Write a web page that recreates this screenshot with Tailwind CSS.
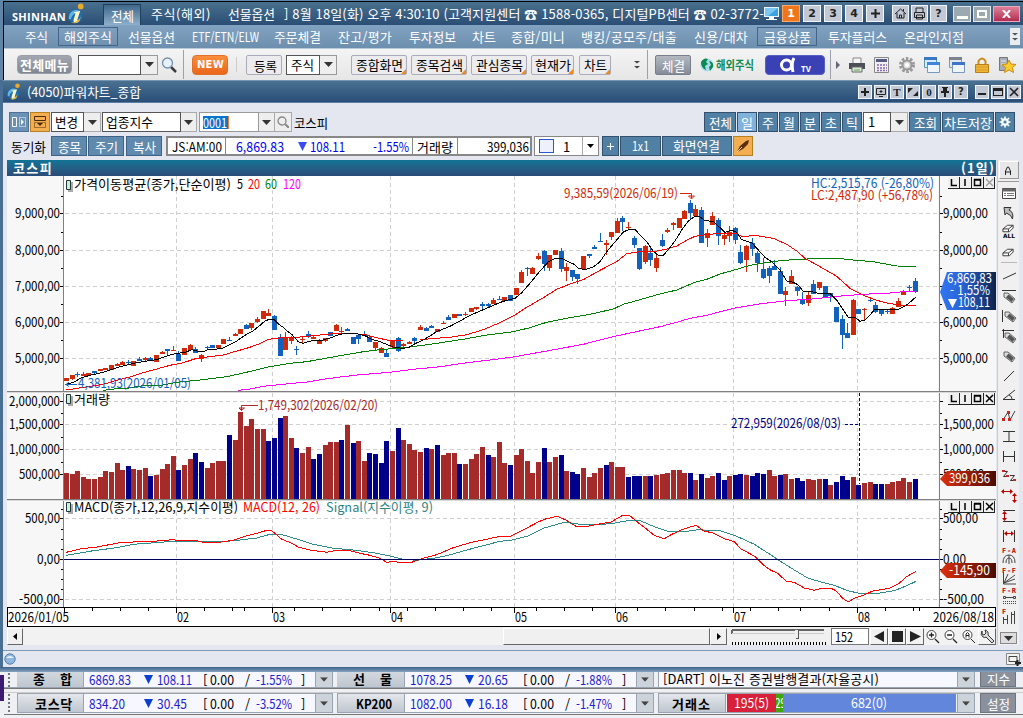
<!DOCTYPE html>
<html lang="ko">
<head>
  <meta charset="UTF-8">
  <meta name="viewport" content="width=device-width, initial-scale=1">
  <title>파워차트_종합</title>
  <script src="https://cdn.jsdelivr.net/npm/@tailwindcss/browser@4"></script>
</head>
<body class="w-[1023px] h-[718px] overflow-hidden bg-[#e4e7f0] font-['Noto_Sans_CJK_KR',sans-serif] text-[13px] leading-none text-black">

  <!-- Shared icons -->
  <svg class="hidden">
    <symbol id="logo" viewBox="0 0 18 22">
      <circle cx="8" cy="14" r="7.5" fill="#1b6fb0"/><path d="M1 17a8 8 0 0 1 11-9l-3 3c-3 0-5 2-6 6z" fill="#63b5e4"/>
      <circle cx="13.500" cy="3.500" r="3" fill="#e9a92c"/><path d="M6 10l7-2-3 9c0 2 2 1 3 0l-2 3c-3 2-6 1-5-3l2-6z" fill="#fff3c4"/><path d="M3 20q6 2 11-6l-2 5q-4 4-9 1z" fill="#e3aa35"/>
    </symbol>
    <symbol id="down" viewBox="0 0 9 5"><path d="M0 0h9L4.500 5z" fill="currentColor"/></symbol>
    <symbol id="lens" viewBox="0 0 16 16"><path d="M10 10l5 5" stroke="#3b3b3b" stroke-width="2.500"/><circle cx="6.500" cy="6" r="5" fill="#e6f1fa" stroke="#7590a8" stroke-width="1.300"/></symbol>
    <symbol id="pen" viewBox="0 0 20 20"><path d="M5 6h4l7 6-3 4-8-6z" fill="#ddd" stroke="#444" stroke-width=".8"/><path d="M9.500 7.500l5.500 4.500-2.500 3-5.500-4.500z" fill="#555"/></symbol>
    <symbol id="eraser" viewBox="0 0 14 9"><path d="M1 5l5-4h6v3L8 8H1zM1 5h6l5-4M7 5v3" fill="#fff" stroke="#333"/></symbol>
    <symbol id="chev" viewBox="0 0 6 9"><path d="M0 1h6L3 3.500zM0 6h6L3 8.500z" fill="currentColor"/></symbol>
  </svg>

  <!-- App frame -->
  <div class="h-[80px] bg-[#5f86a6] pl-[3px] pt-px">
  <div class="h-[79px] bg-black pl-px pt-px overflow-hidden">
    <header class="flex items-center h-[23px] bg-linear-to-b from-[#49708f] to-[#2b4e74] text-white">
      <span data-fit class="ml-[8px] mt-[5px] w-[54px] font-bold font-['Open_Sans'] text-[11px]">SHINHAN</span>
      <svg class="ml-[2px] w-[17px] h-[21px]"><use href="#logo"/></svg>
      <div class="ml-[18px] mt-[2px] w-[38px] h-[21px] pl-[7px] pt-[4px] border border-[#223f5e] border-b-0 bg-linear-to-b from-[#3e678a] to-[#8fb0cb]"><span data-fit class="block w-[23px]">전체</span></div>
      <span data-fit class="ml-[10px] w-[60px]">주식(해외)</span>
      <span data-fit class="ml-[17px] w-[47px]">선물옵션</span>
      <span data-fit class="ml-[9px] w-[480px]">] 8월 18일(화) 오후 4:30:10 (고객지원센터 ☎ 1588-0365, 디지털PB센터 ☎ 02-3772-</span>
      <svg class="w-[16px] h-[16px] shrink-0" viewBox="0 0 16 16"><path d="M0 1h15v10H0z" fill="#e8f3fb"/><path d="M1 2h13v8H1z" fill="#3ea1e0"/><path d="M1 2h13L4 10H1z" fill="#7cc8f2"/><path d="M5 11h5v2h3v1H2v-1h3z" fill="#fff"/></svg>
      <div class="flex gap-[3px] ml-[2px] font-bold font-['DejaVu_Sans'] text-[11px] text-[#222] text-center leading-[15px]">
        <span class="w-[18px] h-[17px] border border-[#f8a96b] bg-[#f0761d] text-white">1</span>
        <span class="w-[18px] h-[17px] border border-[#f3f5f8] bg-[#c3c9d4]">2</span>
        <span class="w-[18px] h-[17px] border border-[#f3f5f8] bg-[#c3c9d4]">3</span>
        <span class="w-[18px] h-[17px] border border-[#f3f5f8] bg-[#c3c9d4]">4</span>
        <span class="w-[18px] h-[17px] border border-[#f3f5f8] bg-[#c3c9d4] flex items-center justify-center"><svg width="9" height="9"><path d="M3.500 0h2v3.500H9v2H5.500V9h-2V5.500H0v-2h3.500z" fill="#222"/></svg></span>
      </div>
      <div class="flex gap-[2px] ml-[8px] shrink-0">
        <span class="w-[17px] h-[17px] border border-[#f3f5f8] bg-[#c3c9d4]"><svg viewBox="0 0 15 15"><path d="M2 8l5.500-5L13 8M4 7v5h7V7M6.500 12V9h2v3M10.500 3v2" fill="none" stroke="#222"/></svg></span>
        <span class="w-[17px] h-[17px] border border-[#f3f5f8] bg-[#c3c9d4]"><svg viewBox="0 0 15 15"><path d="M4 6V2h7v4M2.500 6.500h10v5h-10zM4.500 9h6v4h-6z" fill="none" stroke="#222"/></svg></span>
        <span class="w-[17px] h-[17px] border border-[#f3f5f8] bg-[#c3c9d4] font-bold font-['DejaVu_Sans'] text-[11px] text-[#222] text-center leading-[15px]">?</span>
      </div>
      <div class="flex gap-[2px] ml-[6px] shrink-0">
        <span class="w-[18px] h-[16px] border border-[#e1e7ea] bg-[#9da9b1] flex items-end justify-center pb-[2px]"><i class="w-[11px] h-[3px] bg-white"></i></span>
        <span class="w-[18px] h-[16px] border border-[#e1e7ea] bg-[#9da9b1] flex items-center justify-center"><i class="w-[10px] h-[8px] border-2 border-white"></i></span>
        <span class="w-[27px] h-[16px] border border-[#e8aabb] bg-linear-to-b from-[#dc8099] to-[#b32850] flex items-center justify-center"><svg width="9" height="8"><path d="M1 0l7 8M8 0L1 8" stroke="#fff" stroke-width="2"/></svg></span>
      </div>
    </header>

    <nav class="flex items-center h-[23px] bg-linear-to-b from-[#82a2c1] to-[#6d8fae] text-white">
      <span data-fit class="ml-[21px] w-[23px]">주식</span>
      <div class="ml-[10px] w-[60px] h-[19px] border border-[#44648a] pl-[5px] pt-[2px]"><span data-fit class="block w-[48px]">해외주식</span></div>
      <span data-fit class="ml-[10px] w-[47px]">선물옵션</span>
      <span data-fit class="ml-[17px] w-[67px]">ETF/ETN/ELW</span>
      <span data-fit class="ml-[15px] w-[47px]">주문체결</span>
      <span data-fit class="ml-[17px] w-[54px]">잔고/평가</span>
      <span data-fit class="ml-[17px] w-[47px]">투자정보</span>
      <span data-fit class="ml-[16px] w-[24px]">차트</span>
      <span data-fit class="ml-[15px] w-[54px]">종합/미니</span>
      <span data-fit class="ml-[16px] w-[96px]">뱅킹/공모주/대출</span>
      <span data-fit class="ml-[17px] w-[54px]">신용/대차</span>
      <div class="ml-[9px] w-[60px] h-[19px] border border-[#44648a] pl-[6px] pt-[2px]"><span data-fit class="block w-[47px]">금융상품</span></div>
      <span data-fit class="ml-[11px] w-[59px]">투자플러스</span>
      <span data-fit class="ml-[17px] w-[60px]">온라인지점</span>
      <span class="ml-[46px] w-[10px] h-[17px] bg-[#e9edf2] flex items-center justify-center text-[#555]"><svg width="6" height="9"><use href="#chev"/></svg></span>
    </nav>

    <div class="flex items-center h-[32px] bg-linear-to-b from-[#f4f4f5] to-[#e6e6e7] border-t border-t-[#b9c9d8] pl-[2px]">
      <div class="ml-[11px] w-[55px] h-[19px] rounded-sm border border-[#9a9fa8] bg-linear-to-b from-[#a2a7b0] to-[#828893] text-white font-bold pl-[2px] pt-[2px]"><span data-fit class="block w-[49px]">전체메뉴</span></div>
      <div class="ml-[6px] w-[63px] h-[20px] border border-[#555] bg-white"></div>
      <div class="w-[17px] h-[20px] border border-l-0 border-[#999] bg-[#eee] flex items-center justify-center text-[#333]"><svg width="9" height="5"><use href="#down"/></svg></div>
      <svg class="ml-[3px] w-[16px] h-[16px]"><use href="#lens"/></svg>
      <i class="ml-[6px] w-px h-[29px] bg-[#9aa2ad]"></i>
      <div class="ml-[8px] w-[36px] h-[20px] rounded-sm border border-[#e0702a] bg-linear-to-b from-[#fb8e3c] to-[#e9661a] text-white font-bold font-['DejaVu_Sans'] text-[10px] pl-[4px] pt-[4px]"><span data-fit class="block w-[27px]">NEW</span></div>
      <i class="ml-[8px] w-px h-[15px] bg-[#ccc]"></i>
      <div class="ml-[9px] w-[36px] h-[20px] rounded-xs border border-[#aab] bg-[#ececee] pl-[7px] pt-[3px]"><span data-fit class="block w-[23px]">등록</span></div>
      <div class="ml-[4px] w-[34px] h-[20px] border border-[#555] bg-white pl-[4px] pt-[2px]"><span data-fit class="block w-[23px]">주식</span></div>
      <div class="w-[17px] h-[20px] border border-l-0 border-[#999] bg-[#eee] flex items-center justify-center text-[#333]"><svg width="9" height="5"><use href="#down"/></svg></div>
      <div class="relative ml-[14px] w-[56px] h-[20px] rounded-xs border border-[#aab] bg-[#ececee] pl-[4px] pt-[2px]"><span data-fit class="block w-[47px]">종합화면</span><svg class="absolute right-0 bottom-0" width="5" height="5"><path d="M5 0v5H0z" fill="#ee8a1d"/></svg></div>
      <div class="relative ml-[4px] w-[56px] h-[20px] rounded-xs border border-[#aab] bg-[#ececee] pl-[4px] pt-[2px]"><span data-fit class="block w-[47px]">종목검색</span><svg class="absolute right-0 bottom-0" width="5" height="5"><path d="M5 0v5H0z" fill="#ee8a1d"/></svg></div>
      <div class="relative ml-[4px] w-[56px] h-[20px] rounded-xs border border-[#aab] bg-[#ececee] pl-[4px] pt-[2px]"><span data-fit class="block w-[47px]">관심종목</span><svg class="absolute right-0 bottom-0" width="5" height="5"><path d="M5 0v5H0z" fill="#ee8a1d"/></svg></div>
      <div class="relative ml-[4px] w-[43px] h-[20px] rounded-xs border border-[#aab] bg-[#ececee] pl-[3px] pt-[2px]"><span data-fit class="block w-[36px]">현재가</span><svg class="absolute right-0 bottom-0" width="5" height="5"><path d="M5 0v5H0z" fill="#ee8a1d"/></svg></div>
      <div class="relative ml-[5px] w-[32px] h-[20px] rounded-xs border border-[#aab] bg-[#ececee] pl-[4px] pt-[2px]"><span data-fit class="block w-[23px]">차트</span><svg class="absolute right-0 bottom-0" width="5" height="5"><path d="M5 0v5H0z" fill="#ee8a1d"/></svg></div>
      <svg class="ml-[23px] text-[#444]" width="6" height="9"><use href="#chev"/></svg>
      <i class="ml-[7px] w-px h-[29px] bg-[#9aa2ad]"></i>
      <div class="ml-[7px] w-[36px] h-[20px] rounded-xs border border-[#777f8b] bg-linear-to-b from-[#b3b8bf] to-[#868d98] text-white pl-[6px] pt-[3px]"><span data-fit class="block w-[23px]">체결</span></div>
      <svg class="ml-[9px]" width="14" height="14"><circle cx="7" cy="7" r="6.500" fill="#a9dcee"/><path d="M1 4q3-5 7-3l-2 3 2 2-3 2 1 4q-5-2-5-8zM9 3q5 1 4 6l-3 4-1-4 2-2z" fill="#0c8a54"/></svg>
      <span data-fit class="ml-[2px] w-[38px] font-bold text-[#0c8a50] text-[12px]">해외주식</span>
      <div class="ml-[11px] w-[60px] h-[20px] rounded-sm bg-[#3a41b4] border border-[#5560c4] shrink-0">
        <svg width="58" height="18"><circle cx="20.500" cy="9" r="5" fill="none" stroke="#fff" stroke-width="3"/><path d="M28 2q-3 5-1 14" fill="none" stroke="#fff" stroke-width="3"/><text x="35" y="16" fill="#fff" font-size="8" font-weight="700" font-family="Open Sans">TV</text></svg>
      </div>
      <i class="ml-[5px] w-px h-[29px] bg-[#9aa2ad]"></i>
      <svg class="ml-[5px]" width="4" height="8"><path d="M0 0l4 4-4 4z" fill="#667"/></svg>
      <div class="flex gap-[9px] ml-[9px] shrink-0">
        <svg width="16" height="16"><path d="M4 1h8v6H4z" fill="#f6f6f6" stroke="#888"/><path d="M0 6h16v6H0z" fill="#4b4f56"/><path d="M3 10h10v5H3z" fill="#dfe9da" stroke="#666"/><path d="M5 13h6" stroke="#5a5"/></svg>
        <svg width="16" height="16"><path d="M.5.5h14v15H.5z" fill="#f0eff5" stroke="#888"/><path d="M2 2h11v3H2z" fill="#555a80"/><path d="M3 8h10M3 11h10M3 13.500h10" stroke="#8468a8" stroke-width="1.500" stroke-dasharray="2 1"/></svg>
        <svg width="16" height="16"><circle cx="8" cy="8" r="6.500" fill="none" stroke="#999" stroke-width="3" stroke-dasharray="2.500 1.600"/><circle cx="8" cy="8" r="4.500" fill="#ddd" stroke="#999" stroke-width="2"/><circle cx="8" cy="8" r="2" fill="#fff"/></svg>
        <svg width="16" height="16"><path d="M.5.5h12v10H.5z" fill="#dbeafa" stroke="#59a"/><path d="M0 0h13v3H0z" fill="#3978c8"/><path d="M3.500 5.500h12v10h-12z" fill="#eef5fc" stroke="#79b"/><path d="M3 5h13v3H3z" fill="#3f84d8"/></svg>
        <svg width="16" height="16"><path d="M.5.5h12v10H.5z" fill="#e4e7ea" stroke="#899"/><path d="M0 0h13v3H0z" fill="#7a8490"/><path d="M3.500 5.500h12v10h-12z" fill="#eef5fc" stroke="#79b"/><path d="M3 5h13v3H3z" fill="#3f74c8"/></svg>
        <svg width="16" height="16"><path d="M4.500 7V4q3.500-5 7 0v3" fill="none" stroke="#c98e20" stroke-width="2"/><path d="M1.500 7.500h13v8h-13z" fill="#f0b534" stroke="#b8801c"/><path d="M2 10h12M2 13h12" stroke="#d79a26"/></svg>
        <svg width="17" height="16"><path d="M.5.500h8v13h-8z" fill="#a7adb4" stroke="#777"/><path d="M2 4h5M2 7h5" stroke="#eee"/><path d="M10 3l2 4 5 .5-3.500 3 1 5-4.500-2.500L5.500 15.500l1-5L3 7.500l5-.5z" fill="#fbcb2c" stroke="#c88d15"/></svg>
      </div>
    </div>
  </div>
  </div>

  <!-- Chart window -->
  <div class="h-[592px] border-l-[3px] border-[#4a6f94] bg-[#e4e7f0]">
    <div class="flex items-center h-[23px] bg-linear-to-b from-[#4a7191] to-[#294e78] border-t border-t-[#7595b2] border-b border-b-[#5a7fa2] text-white">
      <svg class="ml-[4px] w-[14px] h-[17px]"><use href="#logo"/></svg>
      <span data-fit class="ml-[6px] w-[114px]">(4050)파워차트_종합</span>
      <div class="flex gap-[2px] ml-[717px] text-[#222] text-[11px] font-bold font-['Liberation_Serif'] text-center leading-[12px] shrink-0">
        <span class="w-[14px] h-[14px] border border-[#f3f5f8] bg-[#c3c9d4]"><svg viewBox="0 0 12 12"><path d="M5 2h2v3h3v2H7v3H5V7H2V5h3z" fill="#222"/></svg></span>
        <span class="w-[14px] h-[14px] border border-[#f3f5f8] bg-[#c3c9d4]"><svg viewBox="0 0 12 12"><path d="M1.500 2.500h9v6h-9zM4 10.500h4M6 4v3M4.500 5.500h3" fill="none" stroke="#222"/></svg></span>
        <span class="w-[14px] h-[14px] border border-[#f3f5f8] bg-[#c3c9d4]">T</span>
        <span class="w-[14px] h-[14px] border border-[#f3f5f8] bg-[#c3c9d4]"><svg viewBox="0 0 12 12"><path d="M1 2h5L1 7zM11 5v5H6z" fill="#222"/></svg></span>
        <span class="w-[14px] h-[14px] border border-[#f3f5f8] bg-[#c3c9d4]">0</span>
        <span class="w-[14px] h-[14px] border border-[#f3f5f8] bg-[#c3c9d4]"><svg viewBox="0 0 12 12"><path d="M3 1h6v1H8v3h2v2H7v4H5V7H2V5h2V2H3z" fill="#222"/></svg></span>
        <span class="w-[14px] h-[14px] border border-[#f3f5f8] bg-[#c3c9d4] font-['DejaVu_Sans'] text-[10px]">?</span>
      </div>
      <div class="flex gap-[2px] ml-[7px] shrink-0">
        <span class="w-[14px] h-[14px] border border-[#f3f5f8] bg-[#c3c9d4]"><svg viewBox="0 0 12 12"><path d="M2 7h8v2H2z" fill="#222"/></svg></span>
        <span class="w-[14px] h-[14px] border border-[#f3f5f8] bg-[#c3c9d4]"><svg viewBox="0 0 12 12"><path d="M1 2h10v8H1zm1 3v4h8V5z" fill="#222" fill-rule="evenodd"/></svg></span>
        <span class="w-[14px] h-[14px] border border-[#f3f5f8] bg-[#c3c9d4]"><svg viewBox="0 0 12 12"><path d="M2 2l8 8M10 2l-8 8" stroke="#222" stroke-width="1.600"/></svg></span>
      </div>
    </div>

    <!-- Symbol row -->
    <div class="flex items-center h-[20px] mt-[9px] pl-[6px]">
      <div class="w-[20px] h-[20px] border border-[#4f7195] bg-[#6b92b5]"><svg viewBox="0 0 18 18"><path d="M2.500 4.500h4v9h-4z" fill="none" stroke="#fff"/><path d="M9.500 4.500h6v9h-6z" fill="none" stroke="#fff" stroke-dasharray="1 1"/><path d="M11 6l3 3-3 3z" fill="#fff"/></svg></div>
      <div class="ml-px w-[20px] h-[20px] border border-[#b9801f] bg-[#f3ae52]"><svg viewBox="0 0 18 18"><path d="M3.500 3.500h11v4h-11z" fill="none" stroke="#4a2d08"/><path d="M3.500 9.500h11v5h-11z" fill="none" stroke="#4a2d08" stroke-dasharray="1 1"/><path d="M6 10h6l-3 3z" fill="#4a2d08"/></svg></div>
      <div class="ml-px w-[33px] h-[20px] border border-[#555] bg-white pl-[3px] pt-[2px]"><span data-fit class="block w-[23px]">변경</span></div>
      <div class="w-[17px] h-[20px] border border-l-0 border-[#aaa] bg-[#eee] flex items-center justify-center text-[#333]"><svg width="9" height="5"><use href="#down"/></svg></div>
      <div class="ml-px w-[79px] h-[20px] border border-[#555] bg-white pl-[3px] pt-[2px]"><span data-fit class="block w-[47px]">업종지수</span></div>
      <div class="w-[16px] h-[20px] border border-l-0 border-[#aaa] bg-[#eee] flex items-center justify-center text-[#333]"><svg width="9" height="5"><use href="#down"/></svg></div>
      <div class="ml-[2px] w-[60px] h-[20px] border border-[#999] bg-white pl-[3px] pt-[3px]"><div class="w-[26px] h-[13px] bg-[#0b74cf] border-r border-[#f08030] text-white"><span data-fit class="block w-[24px]">0001</span></div></div>
      <div class="w-[16px] h-[20px] border border-l-0 border-[#aaa] bg-[#eee] flex items-center justify-center text-[#333]"><svg width="9" height="5"><use href="#down"/></svg></div>
      <div class="w-[17px] h-[20px] border border-l-0 border-[#aaa] bg-[#eee] flex items-center justify-center"><svg class="w-[12px] h-[12px]" viewBox="0 0 12 12"><circle cx="5" cy="5" r="4" fill="none" stroke="#888" stroke-width="1.300"/><path d="M8 8l4 4" stroke="#888" stroke-width="2"/></svg></div>
      <span data-fit class="ml-[2px] w-[34px]">코스피</span>
      <div class="flex gap-px ml-[376px] text-white shrink-0">
        <div class="w-[32px] h-[20px] border border-[#33506f] bg-[#5180a5] pl-[4px] pt-[3px]"><span data-fit class="block w-[23px]">전체</span></div>
        <div class="w-[20px] h-[20px] border border-[#33506f] bg-[#7fb2dc] text-center pt-[3px]">일</div>
        <div class="w-[20px] h-[20px] border border-[#33506f] bg-[#5180a5] text-center pt-[3px]">주</div>
        <div class="w-[20px] h-[20px] border border-[#33506f] bg-[#5180a5] text-center pt-[3px]">월</div>
        <div class="w-[20px] h-[20px] border border-[#33506f] bg-[#5180a5] text-center pt-[3px]">분</div>
        <div class="w-[20px] h-[20px] border border-[#33506f] bg-[#5180a5] text-center pt-[3px]">초</div>
        <div class="w-[20px] h-[20px] border border-[#33506f] bg-[#5180a5] text-center pt-[3px]">틱</div>
        <div class="flex"><div class="w-[28px] h-[20px] border border-[#555] bg-white text-black pl-[4px] pt-[2px]">1</div><div class="w-[17px] h-[20px] border border-l-0 border-[#aaa] bg-[#eee] flex items-center justify-center text-[#333]"><svg width="9" height="5"><use href="#down"/></svg></div></div>
        <div class="w-[32px] h-[20px] border border-[#33506f] bg-[#5180a5] pl-[4px] pt-[3px]"><span data-fit class="block w-[23px]">조회</span></div>
        <div class="w-[52px] h-[20px] border border-[#33506f] bg-[#5180a5] pl-[1px] pt-[3px]"><span data-fit class="block w-[48px]">차트저장</span></div>
        <div class="w-[20px] h-[20px] border border-[#33506f] bg-[#5180a5]"><svg viewBox="0 0 18 18"><circle cx="9" cy="9" r="2.800" fill="none" stroke="#fff" stroke-width="2"/><path d="M9 3.500v11M3.500 9h11M5 5l2 2M11 11l2 2M13 5l-2 2M7 11l-2 2" stroke="#fff" stroke-width="1.600"/><circle cx="9" cy="9" r="1.500" fill="#5180a5"/></svg></div>
      </div>
    </div>

    <!-- Quote row -->
    <div class="flex items-center h-[20px] mt-[4px] pl-[8px]">
      <span data-fit class="w-[35px]">동기화</span>
      <div class="ml-[5px] w-[36px] h-[20px] border border-[#3e6288] bg-[#5f8aae] text-white pl-[6px] pt-[3px]"><span data-fit class="block w-[23px]">종목</span></div>
      <div class="ml-px w-[36px] h-[20px] border border-[#3e6288] bg-[#5f8aae] text-white pl-[6px] pt-[3px]"><span data-fit class="block w-[23px]">주기</span></div>
      <div class="ml-[2px] w-[36px] h-[20px] border border-[#3e6288] bg-[#5f8aae] text-white pl-[6px] pt-[3px]"><span data-fit class="block w-[23px]">복사</span></div>
      <div class="flex items-center ml-[4px] w-[366px] h-[20px] border-2 border-[#888] bg-white text-[#0000f0] shrink-0">
        <span data-fit class="ml-[4px] w-[50px] text-black">JS:AM:00</span><i class="ml-[3px] w-px h-full bg-[#888]"></i>
        <span data-fit class="ml-[10px] w-[48px]">6,869.83</span>
        <svg class="ml-[14px]" width="9" height="9"><path d="M0 0h9L4.500 9z" fill="#3b4cf5"/></svg>
        <span data-fit class="ml-[3px] w-[35px]">108.11</span>
        <span data-fit class="ml-[28px] w-[36px]">-1.55%</span><i class="ml-[3px] w-px h-full bg-[#888]"></i>
        <span data-fit class="ml-[4px] w-[36px] text-black">거래량</span><i class="ml-[4px] w-px h-full bg-[#888]"></i>
        <span data-fit class="ml-[29px] w-[42px] text-black">399,036</span>
      </div>
      <div class="flex items-center ml-[2px] w-[65px] h-[20px] border border-[#888] bg-white shrink-0"><i class="ml-[4px] w-[15px] h-[14px] border border-[#2b57c8] bg-[#eef1fb]"></i><span class="ml-[9px]">1</span><div class="ml-auto w-[16px] h-full border-l border-[#aaa] flex items-center justify-center"><svg width="7" height="4" viewBox="0 0 9 5"><use href="#down"/></svg></div></div>
      <div class="ml-[3px] w-[17px] h-[20px] border border-[#33506f] bg-[#5180a5] flex items-center justify-center"><svg width="7" height="7"><path d="M3.500 0v7M0 3.500h7" stroke="#fff"/></svg></div>
      <div class="ml-px w-[41px] h-[20px] border border-[#33506f] bg-[#5180a5] text-white pl-[11px] pt-[2px]"><span data-fit class="block w-[17px]">1x1</span></div>
      <div class="ml-px w-[70px] h-[20px] border border-[#33506f] bg-[#5180a5] text-white pl-[10px] pt-[2px]"><span data-fit class="block w-[47px]">화면연결</span></div>
      <div class="ml-px w-[20px] h-[20px] border border-[#b9801f] bg-[#f3ae52]"><svg viewBox="0 0 18 18"><path d="M3 15l3-6 6-5 3-1-1 4-5 5z" fill="#5a2d0b"/><path d="M3 15l5-5" stroke="#f8d9a8"/></svg></div>
    </div>

    <div class="flex mt-[4px] ml-[4px] h-[485px]">
      <!-- Chart column -->
      <div class="w-[989px] shrink-0">
        <div class="flex justify-between h-[16px] bg-linear-to-b from-[#107496] to-[#294c78] text-white font-bold pl-[6px] pr-px pt-px"><span data-fit class="w-[40px]">코스피</span><span data-fit class="w-[34px]">(1일)</span></div>
        <svg id="chart" class="block" width="989" height="451" viewBox="7 176 989 451" font-size="13">
          <defs>
            <linearGradient id="redTag"><stop offset="0" stop-color="#e0300e"/><stop offset="1" stop-color="#4a0b02"/></linearGradient>
            <linearGradient id="blueTag"><stop offset="0" stop-color="#3277f4"/><stop offset=".4" stop-color="#2a62d4"/><stop offset="1" stop-color="#0f2348"/></linearGradient>
            <g id="paneBtns"><path d="M0 0h47v12H0z" fill="#f0f0f0"/><path d="M0 11.500h47M11.500 0v12M23.500 0v12M35.500 0v12M46.500 0v12" stroke="#222"/><path d="M3.500 2v6.500H9M17 2v7" stroke="#000" fill="none" stroke-width="1.500"/><path d="M26.500 3h6v5.500h-6zM26 2.500h7" fill="none" stroke="#000" stroke-width="1.500"/></g>
            <g id="legendBox"><path d="M2 2h5v10H2z" fill="#aaa"/><path d="M.5.500h4v9h-4z" fill="#c8f5c8" stroke="#234"/></g>
          </defs>
          <rect x="7" y="176" width="989" height="451" fill="#f7f7f7"/>
          <rect x="64" y="176" width="874" height="431" fill="#fff"/>
          <g shape-rendering="crispEdges" fill="none">
            <path stroke="#d0d0d0" stroke-dasharray="4 3" d="M65 213.500H938M65 250.500H938M65 286.500H938M65 322.500H938M65 358.500H938M65 401.500H938M65 424.500H938M65 449.500H938M65 474.500H938M65 518.500H938M65 599.500H938M176.500 176V607M272.500 176V607M390.500 176V607M514.500 176V607M615.500 176V607M733.500 176V607M857.500 176V607"/>
            <path stroke="#000" d="M60 213.500h4M60 250.500h4M60 286.500h4M60 322.500h4M60 358.500h4M60 401.500h4M60 424.500h4M60 449.500h4M60 474.500h4M60 518.500h4M60 559.500h4M60 599.500h4M61 196.500h3M61 232.500h3M61 268.500h3M61 304.500h3M61 340.500h3M61 413.500h3M61 437.500h3M61 462.500h3M61 509.500h3M61 529.500h3M61 539.500h3M61 549.500h3M61 569.500h3M61 579.500h3M61 589.500h3"/>
            <path stroke="#000" d="M939 213.500h4M939 250.500h4M939 286.500h4M939 322.500h4M939 358.500h4M939 401.500h4M939 424.500h4M939 449.500h4M939 474.500h4M939 518.500h4M939 559.500h4M939 599.500h4M939 196.500h3M939 232.500h3M939 268.500h3M939 304.500h3M939 340.500h3M939 413.500h3M939 437.500h3M939 462.500h3M939 509.500h3M939 529.500h3M939 539.500h3M939 549.500h3M939 569.500h3M939 579.500h3M939 589.500h3"/>
          </g>
          <g id="bars" shape-rendering="crispEdges"></g>
          <g id="lines" fill="none" shape-rendering="crispEdges"></g>
          <g shape-rendering="crispEdges">
            <path stroke="#808080" d="M63.500 176V607M939 176V607M7 391.500H996M7 499.500H996"/>
            <path stroke="#d8d8d8" d="M7 392.500H996M7 500.500H996"/>
            <path stroke="#000060" d="M64 559.500H939"/>
            <path stroke="#000080" stroke-dasharray="3 2" d="M859.500 393V484M845 424.500h14"/>
            <path d="M7.500 607.500h988v19h-988z" fill="#fff" stroke="#000"/>
            <path stroke="#000" d="M64.500 607v6M176.500 607v6M272.500 607v6M390.500 607v6M514.500 607v6M615.500 607v6M733.500 607v6M857.500 607v6M92.500 607v4M120.500 607v4M148.500 607v4M204.500 607v4M232.500 607v4M244.500 607v4M294.500 607v4M322.500 607v4M350.500 607v4M379.500 607v4M407.500 607v4M435.500 607v4M463.500 607v4M491.500 607v4M536.500 607v4M564.500 607v4M592.500 607v4M637.500 607v4M665.500 607v4M694.500 607v4M722.500 607v4M750.500 607v4M778.500 607v4M800.500 607v4M829.500 607v4M885.500 607v4M913.500 607v4M919.500 607v4"/>
          </g>
          <!-- Axis labels -->
          <g>
            <text x="15" y="218" textLength="45">9,000,00</text><text x="15" y="255" textLength="45">8,000,00</text><text x="15" y="291" textLength="45">7,000,00</text><text x="15" y="327" textLength="45">6,000,00</text><text x="15" y="363" textLength="45">5,000,00</text>
            <text x="9" y="406" textLength="51">2,000,000</text><text x="9" y="429" textLength="51">1,500,000</text><text x="9" y="454" textLength="51">1,000,000</text><text x="19" y="479" textLength="41">500,000</text>
            <text x="25" y="523" textLength="35">500,00</text><text x="37" y="564" textLength="23">0,00</text><text x="19" y="604" textLength="41">-500,00</text>
            <text x="943" y="218" textLength="45">9,000,00</text><text x="943" y="255" textLength="45">8,000,00</text><text x="943" y="327" textLength="45">6,000,00</text><text x="943" y="363" textLength="45">5,000,00</text>
            <text x="943" y="429" textLength="51">1,500,000</text><text x="943" y="454" textLength="51">1,000,000</text><text x="943" y="479" textLength="41">500,000</text>
            <text x="943" y="523" textLength="35">500,00</text><text x="943" y="564" textLength="23">0,00</text><text x="943" y="604" textLength="41">-500,00</text>
            <text x="8" y="622" textLength="61">2026/01/05</text><text x="177" y="622" textLength="12">02</text><text x="273" y="622" textLength="12">03</text><text x="391" y="622" textLength="12">04</text><text x="515" y="622" textLength="12">05</text><text x="616" y="622" textLength="12">06</text><text x="734" y="622" textLength="12">07</text><text x="858" y="622" textLength="12">08</text><text x="933" y="622" textLength="61">2026/08/18</text>
          </g>
          <use href="#legendBox" x="66" y="180"/><use href="#legendBox" x="66" y="394"/><use href="#legendBox" x="66" y="502"/>
          <text x="74" y="189" textLength="157">가격이동평균(종가,단순이평)</text><text x="237" y="189" textLength="6">5</text><text x="248" y="189" fill="#f00" textLength="12">20</text><text x="265" y="189" fill="#008000" textLength="12">60</text><text x="283" y="189" fill="#f0f" textLength="18">120</text>
          <text x="74" y="404" textLength="36">거래량</text>
          <text x="74" y="512" textLength="164">MACD(종가,12,26,9,지수이평)</text><text x="243" y="512" fill="#f00" textLength="77">MACD(12, 26)</text><text x="326" y="512" fill="#2f8484" textLength="107">Signal(지수이평, 9)</text>
          <text x="564" y="198" fill="#cf2a0c" textLength="114">9,385,59(2026/06/19)</text>
          <path d="M680 193.500h11.500v5M688.500 196l3 3 3-3z" fill="none" stroke="#cf2a0c"/>
          <text x="78" y="388" fill="#1261bd" textLength="113">4,381,93(2026/01/05)</text>
          <path d="M77 384.500H65M69 382l-3 2.500 3 2" fill="none" stroke="#1261bd"/>
          <text x="811" y="188" fill="#1261bd" textLength="123">HC:2,515,76 (-26,80%)</text>
          <text x="811" y="200" fill="#cf2a0c" textLength="122">LC:2,487,90 (+56,78%)</text>
          <text x="258" y="410" fill="#a52a2a" textLength="120">1,749,302(2026/02/20)</text>
          <path d="M258 405.500h-16.500v5M239 408l2.500 2.500 3-2.500z" fill="none" stroke="#a52a2a"/>
          <text x="731" y="428" fill="#000080" textLength="110">272,959(2026/08/03)</text>
          <!-- Price tags -->
          <path d="M940 292l7-20h49v38h-49z" fill="url(#blueTag)"/>
          <g fill="#fff"><text x="947" y="283" textLength="45">6,869,83</text><text x="950" y="295" textLength="40">- 1,55%</text><path d="M948 299h9l-4.500 9z"/><text x="958" y="307" textLength="32">108,11</text></g>
          <path d="M940 479l7-8h49v15h-49z" fill="url(#redTag)"/><text x="949" y="483" fill="#fff" textLength="41">399,036</text>
          <path d="M940 571l7-8h49v15h-49z" fill="url(#redTag)"/><text x="949" y="575" fill="#fff" textLength="41">-145,90</text>
          <use href="#paneBtns" x="948" y="177"/><use href="#paneBtns" x="948" y="393"/><use href="#paneBtns" x="948" y="501"/>
          <path d="M986 179l7 7M993 179l-7 7" stroke="#999" stroke-width="1.300"/><path d="M986 395l7 7M993 395l-7 7M986 503l7 7M993 503l-7 7" stroke="#000" stroke-width="1.500"/>
        </svg>

        <!-- Scroll and zoom strip -->
        <div class="flex items-center h-[18px] bg-[#f2f2f3]">
          <div class="w-[16px] h-[17px] border border-white border-r-[#666] border-b-[#666] bg-[#f0f0f0] flex items-center justify-center"><svg width="4" height="7"><path d="M4 0v7L0 3.500z"/></svg></div>
          <div class="ml-[480px] w-[207px] h-[17px] border border-white border-r-[#666] border-b-[#666] bg-[#f0f0f0]"></div>
          <div class="w-[17px] h-[17px] border border-white border-r-[#666] border-b-[#666] bg-[#f0f0f0] flex items-center justify-center"><svg width="4" height="7"><path d="M0 0v7l4-3.500z"/></svg></div>
          <svg class="bg-[#f0f0f0]" width="104" height="18" shape-rendering="crispEdges"><path d="M5 3h92M5 3v4" stroke="#666" stroke-width="2"/><path d="M5 6.500h92" stroke="#ccc"/><path d="M68 3h3v8h-3z" fill="#eee"/><path d="M71.500 2v9h-3" fill="none" stroke="#555"/><path d="M5 16h95" stroke="#000" stroke-width="3" stroke-dasharray="1 2"/></svg>
          <div class="w-[38px] h-[17px] border border-[#777] bg-white pl-[3px] pt-px shrink-0"><span data-fit class="block w-[18px]">152</span></div>
          <div class="flex shrink-0 ml-px">
            <svg class="border border-white border-r-[#666] border-b-[#666]" width="18" height="17"><path d="M13 2v11L3 7.500z" fill="#222"/></svg>
            <svg class="border border-white border-r-[#666] border-b-[#666]" width="18" height="17"><path d="M3 2h11v11H3z" fill="#222"/></svg>
            <svg class="border border-white border-r-[#666] border-b-[#666]" width="18" height="17"><path d="M3 2v11l11-5.500z" fill="#222"/></svg>
            <svg width="18" height="17"><circle cx="7.500" cy="7" r="4.500" fill="#fff" stroke="#444"/><path d="M11 11l4 4M5 7h5M7.500 4.500v5" stroke="#222" stroke-width="1.300"/></svg>
            <svg width="18" height="17"><circle cx="7.500" cy="7" r="4.500" fill="#fff" stroke="#444"/><path d="M11 11l4 4M5 7h5" stroke="#222" stroke-width="1.300"/></svg>
            <svg width="18" height="17"><circle cx="7.500" cy="7" r="4.500" fill="#fff" stroke="#444"/><path d="M11 11l4 4M6 9.500V6l1.500-1.500L9 6v3.500M6 7.500h3" fill="none" stroke="#222"/></svg>
            <svg class="border border-white border-r-[#666] border-b-[#666]" width="18" height="17"><path d="M3 2q-2 4 1 6 2 1 3 0l6 6 2-2-6-6q1-4-3-5l1 3-2 2-2-1z" fill="#ddd" stroke="#333"/></svg>
          </div>
        </div>
      </div>

      <!-- Drawing tools -->
      <aside class="w-[22px] ml-px bg-[#f0f0f0] border-l border-[#ccc] shrink-0 flex flex-col items-center">
        <div class="w-[20px] h-[18px] mt-px border border-[#999] border-t-white border-l-white bg-[#e8e8ea] flex items-center justify-center"><svg width="7" height="9"><path d="M.5 9V5l2-4h1l2 4v4M1 6h5" fill="none" stroke="#222"/></svg></div>
        <i class="w-full h-px mt-[2px] mb-px bg-[#999]"></i>
        <svg width="20" height="20"><path d="M3.500 5.500h13v10h-13z" fill="#fff" stroke="#444"/><path d="M3 7h14" stroke="#666" stroke-width="3"/><path d="M5 10.500h2m1 0h7M5 12.500h2m1 0h7" stroke="#777"/></svg>
        <svg width="20" height="20"><path d="M5 4.500h7l-2 2.500q5 2 3.500 9-1-4-6-6l-1.500 2z" fill="#bbb" stroke="#333"/></svg>
        <div class="h-[20px] flex flex-col items-center"><svg class="mt-px" width="13" height="9"><use href="#eraser"/></svg><span data-fit class="w-[12px] font-bold font-['DejaVu_Sans'] text-[6px]">ALL</span></div>
        <svg class="py-[5px]" width="13" height="19"><use href="#eraser"/></svg>
        <i class="w-[16px] h-px bg-[#bbb]"></i>
        <svg width="20" height="20" class="mt-[3px]"><path d="M4 13l13-6" stroke="#333"/></svg>
        <svg width="20" height="20"><path d="M3 4.500h14" stroke="#333"/><use href="#pen" y="1"/></svg>
        <svg width="20" height="20"><path d="M3.500 4v12" stroke="#333"/><use href="#pen" x="1"/></svg>
        <svg width="20" height="20"><path d="M3 4.500h12M4.500 3v9" stroke="#333"/><use href="#pen" x="1" y="1"/></svg>
        <svg width="20" height="20"><use href="#pen"/></svg>
        <svg width="20" height="20"><path d="M5 15L15 5" stroke="#333"/></svg>
        <svg width="20" height="20"><path d="M16 4L4 13.500h12M10 9q3 1 3 4" fill="none" stroke="#333"/></svg>
        <svg width="20" height="20"><path d="M4 14l5-8 2 8 5-9" fill="none" stroke="#444"/><path d="M3 12h3v3H3zM8 5h3v3H8zM9 12h3v3H9z" fill="#c22"/></svg>
        <svg width="20" height="20"><path d="M4 5.500h12M4 15.500h12M10 5v10" stroke="#333"/></svg>
        <svg width="20" height="20"><path d="M4.500 5v11M15.500 5v11M4 10.500h12" stroke="#333"/></svg>
        <svg width="20" height="20"><path d="M4 5.500h4.500l-4 5H9M11 9.500h4.500l-4 5H16" fill="none" stroke="#333"/><path d="M3 4h3v2H3zM7 9h3v2H7zM14 13h3v2h-3z" fill="#c22"/></svg>
        <svg width="20" height="20"><path d="M3 5.500h10M15.500 8v8" stroke="#b00"/><path d="M5 3L2 5.500 5 8zM11 3l3 2.500L11 8zM13 10l2.500-3 2.500 3zM13 14l2.500 3 2.500-3z" fill="#b00"/></svg>
        <svg width="20" height="20"><path d="M4 4.500h12M4 15.500h12" stroke="#333"/><path d="M5.500 6v8" stroke="#b00"/><path d="M3 8l2.500-3L8 8zM3 12l2.500 3L8 12z" fill="#b00"/></svg>
        <svg width="20" height="20"><path d="M4.500 4v12M15.500 4v12" stroke="#333"/><path d="M6 7.500h8" stroke="#b00"/><path d="M8 5L5 7.500 8 10zM12 5l3 2.500-3 2.500z" fill="#b00"/></svg>
        <svg width="20" height="20"><text x="3" y="7" font-size="7" font-weight="700" fill="#b00" textLength="14" font-family="DejaVu Sans Mono">F-A</text><path d="M4 17q0-8 6-8t6 8M7 17q0-5 3-5t3 5M10 9v9" fill="none" stroke="#444"/></svg>
        <svg width="20" height="20"><text x="3" y="7" font-size="7" font-weight="700" fill="#b00" textLength="14" font-family="DejaVu Sans Mono">F-F</text><path d="M4.500 6v12H17M5 17L9 8M5 17l11-8M5 17l11-4" fill="none" stroke="#444"/></svg>
        <svg width="20" height="20"><text x="3" y="7" font-size="7" font-weight="700" fill="#b00" textLength="14" font-family="DejaVu Sans Mono">F-R</text><path d="M4.500 10.500h2v2h-2zM14.500 10.500h2v2h-2zM7 11.500h7" fill="none" stroke="#444"/><path d="M4 15.500h13M4 17.500h13" stroke="#444" stroke-dasharray="1 1"/></svg>
        <svg width="20" height="20"><text x="3" y="8" font-size="7" font-weight="700" fill="#b00" font-family="DejaVu Sans Mono">F</text><path d="M4.500 18v-7M8.500 18v-9M12.500 18V6M15.500 18V5M5 13.500h3M13 8.500h3" stroke="#444"/></svg>
        <div class="mt-auto mb-px w-[17px] h-[12px] border border-[#888] bg-[#ddd] flex items-center justify-center text-[#333]"><svg width="9" height="5"><use href="#down"/></svg></div>
      </aside>
    </div>

    <!-- Status line -->
    <div class="flex items-center justify-between mt-[5px] h-[17px] border-t border-[#7a9ab8] px-px pr-[2px]">
      <svg width="12" height="12"><circle cx="6" cy="6" r="5.200" fill="#8fb7e0" stroke="#5880a8"/><path d="M2 5q4-4 8 0z" fill="#e8f3fc"/></svg>
      <svg width="15" height="13"><path d="M.5.500h13v11H.5z" fill="#f4f4f4" stroke="#888"/><path d="M3 3.500h8v5H3z" fill="none" stroke="#444"/><path d="M11.500 7v6M9 10h6" stroke="#222" stroke-width="2"/></svg>
    </div>
    <div class="h-[5px] -ml-[3px] bg-linear-to-b from-[#3c6188] to-[#86a4be]"></div>
  </div>

  <!-- Index tickers -->
  <footer class="relative h-[46px] pl-[4px] bg-[#eef0f3] text-[#2222cc]">
    <i class="absolute left-0 top-[3px] w-[4px] h-[26px] bg-[#3c1a72]"></i>
    <div class="flex items-center h-[16px] pl-[4px] border-b border-[#9aa3b0]">
      <svg width="3" height="14"><path d="M1 0v14" stroke="#777" stroke-width="2" stroke-dasharray="2 2"/></svg>
      <div class="ml-[6px] w-[66px] h-full bg-linear-to-b from-[#d3d8df] to-[#bfc6cf] text-black font-bold pl-[16px]"><span data-fit class="block w-[40px]">종   합</span></div>
      <div class="flex items-center w-[232px] h-full bg-[#f6f7ff] border-l border-[#9aa3b0] shrink-0">
        <span data-fit class="ml-[5px] w-[42px]">6869.83</span><svg class="ml-[13px]" width="9" height="9"><path d="M0 0h9L4.500 9z" fill="#0b3fd0"/></svg><span data-fit class="ml-[4px] w-[35px]">108.11</span>
        <span class="ml-[11px] w-[4px] text-black">[</span><span data-fit class="ml-[3px] w-[24px] text-black">0.00</span><span class="ml-[11px] w-[4px] text-black">/</span><span data-fit class="ml-[7px] w-[36px]">-1.55%</span><span class="ml-[9px] text-black">]</span>
      </div>
      <div class="w-[18px] h-full bg-[#cdd3db] border-x border-[#9aa3b0] flex items-center justify-center text-[#444]"><svg width="8" height="5" viewBox="0 0 9 5"><use href="#down"/></svg></div>
      <div class="ml-[4px] w-[67px] h-full bg-linear-to-b from-[#d3d8df] to-[#bfc6cf] text-black font-bold pl-[16px]"><span data-fit class="block w-[40px]">선   물</span></div>
      <div class="flex items-center w-[232px] h-full bg-[#f6f7ff] border-l border-[#9aa3b0] shrink-0">
        <span data-fit class="ml-[5px] w-[42px]">1078.25</span><svg class="ml-[13px]" width="9" height="9"><path d="M0 0h9L4.500 9z" fill="#0b3fd0"/></svg><span data-fit class="ml-[4px] w-[30px]">20.65</span>
        <span class="ml-[15px] w-[4px] text-black">[</span><span data-fit class="ml-[3px] w-[24px] text-black">0.00</span><span class="ml-[11px] w-[4px] text-black">/</span><span data-fit class="ml-[7px] w-[36px]">-1.88%</span><span class="ml-[10px] text-black">]</span>
      </div>
      <div class="w-[18px] h-full bg-[#cdd3db] border-x border-[#9aa3b0] flex items-center justify-center text-[#444]"><svg width="8" height="5" viewBox="0 0 9 5"><use href="#down"/></svg></div>
      <div class="ml-[4px] w-[299px] h-full bg-[#f6f7ff] border-l border-[#9aa3b0] text-black pl-[4px]"><span data-fit class="block w-[216px]">[DART] 이노진 증권발행결과(자율공시)</span></div>
      <div class="w-[18px] h-full bg-[#cdd3db] border-x border-[#9aa3b0] flex items-center justify-center text-[#444]"><svg width="8" height="5" viewBox="0 0 9 5"><use href="#down"/></svg></div>
      <div class="ml-[5px] w-[36px] h-full bg-[#8a909c] border border-t-0 border-[#6f7682] text-white pl-[6px] shrink-0"><span data-fit class="block w-[23px]">지수</span></div>
    </div>
    <div class="h-[5px] border-y border-t-[#777] border-b-[#ccc]"></div>
    <div class="flex items-center h-[20px] pl-[4px]">
      <svg width="3" height="18"><path d="M1 0v18" stroke="#777" stroke-width="2" stroke-dasharray="2 2"/></svg>
      <div class="ml-[6px] w-[66px] h-full border-y border-l border-[#9aa3b0] bg-linear-to-b from-[#e4e7eb] to-[#bfc6cf] text-black font-bold pl-[17px] pt-[3px]"><span data-fit class="block w-[38px]">코스닥</span></div>
      <div class="flex items-center w-[232px] h-full bg-[#f6f7ff] border-y border-l border-[#9aa3b0] shrink-0">
        <span data-fit class="ml-[5px] w-[36px]">834.20</span><svg class="ml-[19px]" width="9" height="9"><path d="M0 0h9L4.500 9z" fill="#0b3fd0"/></svg><span data-fit class="ml-[4px] w-[30px]">30.45</span>
        <span class="ml-[16px] w-[4px] text-black">[</span><span data-fit class="ml-[3px] w-[24px] text-black">0.00</span><span class="ml-[11px] w-[4px] text-black">/</span><span data-fit class="ml-[7px] w-[36px]">-3.52%</span><span class="ml-[9px] text-black">]</span>
      </div>
      <div class="w-[18px] h-full bg-[#cdd3db] border border-[#9aa3b0] flex items-center justify-center text-[#444]"><svg width="8" height="5" viewBox="0 0 9 5"><use href="#down"/></svg></div>
      <div class="ml-[4px] w-[67px] h-full border-y border-l border-[#9aa3b0] bg-linear-to-b from-[#e4e7eb] to-[#bfc6cf] text-black font-bold pl-[18px] pt-[3px]"><span data-fit class="block w-[36px]">KP200</span></div>
      <div class="flex items-center w-[232px] h-full bg-[#f6f7ff] border-y border-l border-[#9aa3b0] shrink-0">
        <span data-fit class="ml-[5px] w-[42px]">1082.00</span><svg class="ml-[13px]" width="9" height="9"><path d="M0 0h9L4.500 9z" fill="#0b3fd0"/></svg><span data-fit class="ml-[4px] w-[30px]">16.18</span>
        <span class="ml-[15px] w-[4px] text-black">[</span><span data-fit class="ml-[3px] w-[24px] text-black">0.00</span><span class="ml-[11px] w-[4px] text-black">/</span><span data-fit class="ml-[7px] w-[36px]">-1.47%</span><span class="ml-[10px] text-black">]</span>
      </div>
      <div class="w-[18px] h-full bg-[#cdd3db] border border-[#9aa3b0] flex items-center justify-center text-[#444]"><svg width="8" height="5" viewBox="0 0 9 5"><use href="#down"/></svg></div>
      <div class="ml-[4px] w-[67px] h-full border-y border-l border-[#9aa3b0] bg-linear-to-b from-[#e4e7eb] to-[#bfc6cf] text-black font-bold pl-[13px] pt-[3px]"><span data-fit class="block w-[39px]">거래소</span></div>
      <div class="flex items-center w-[232px] h-full border-y border-l border-[#9aa3b0] text-white leading-[18px] shrink-0">
        <div class="ml-px w-[49px] h-full bg-[#d8203a] pl-[7px]"><span data-fit class="block w-[35px]">195(5)</span></div>
        <div class="w-[7px] h-full bg-[#3da60a] overflow-hidden"><span data-fit class="block w-[11px] -ml-px">29</span></div>
        <div class="w-[173px] h-full bg-[#6386dd] pl-[68px]"><span data-fit class="block w-[36px]">682(0)</span></div>
      </div>
      <div class="w-[18px] h-full bg-[#cdd3db] border border-[#9aa3b0] flex items-center justify-center text-[#444]"><svg width="8" height="5" viewBox="0 0 9 5"><use href="#down"/></svg></div>
      <div class="ml-[5px] w-[36px] h-full bg-[#8a909c] border border-[#6f7682] text-white pl-[6px] pt-[3px] shrink-0"><span data-fit class="block w-[23px]">설정</span></div>
    </div>
    <div class="h-[2px] border-b border-[#777]"></div>
  </footer>

  <script>
    // Fit each label to the width of its box: squeeze long ones, space out short ones
    function fitLabels() {
      document.querySelectorAll('[data-fit]').forEach(el => {
        el.style.whiteSpace = 'pre';
        el.style.flexShrink = 0;
        const range = document.createRange();
        range.selectNodeContents(el);
        const natural = range.getBoundingClientRect().width;
        const target = el.clientWidth;
        if (!target || !natural) return;
        if (natural > target) {
          el.style.transformOrigin = 'left';
          el.style.transform = `scaleX(${target / natural})`;
        } else {
          el.style.letterSpacing = (target - natural) / [...el.textContent].length + 'px';
        }
      });
      document.querySelectorAll('#chart text').forEach(t => t.setAttribute('lengthAdjust', 'spacingAndGlyphs'));
    }
    window.addEventListener('load', fitLabels);

    // Plot values are in thirds of a pixel below the pane top.
    // Candle: colour, body top, body bottom, high, low
    const candles = `r 609 618;r 600 612 600 615;b 597 600 591 606;r 597 603 591 603;r 594 603;b 588 594 588 600;r 582 588;r 579 585;r 570 585;r 567 573 564 573;
r 561 570 558 570;b 561 564 555 570;r 558 573;b 552 558 546 558;r 549 555 546 561;b 549 558 546 558;r 540 561;r 531 537 528 537;b 522 528 522 540;r 525 528 513 528;
b 537 558 528 558;r 519 540;r 510 525 507 525;b 522 534 516 534;r 540 552 537 561;b 516 519 513 522;b 510 519;r 510 519 510 522;r 492 507;b 495 498 486 498;
r 477 483 474 483;r 462 477;b 450 462 447 462;r 444 459 444 465;r 432 441 426 444;r 408 432;r 414 423 402 423;b 423 465 420 465;b 486 543 477 543;r 486 525 471 525;
r 486 498 483 507;b 522 525 513 540;r 492 495 483 504;b 477 486 468 489;r 486 492 483 492;r 495 507 492 507;r 489 498 489 501;b 471 483;r 450 468 447 468;r 468 471 456 474;
b 462 468 459 468;b 486 507;b 480 492 480 507;b 477 483 468 483;b 486 501 483 501;r 501 519 501 525;r 519 534 516 534;b 534 546 525 546;r 498 516 495 519;b 489 528 486 531;
r 507 513 504 519;r 501 507 498 507;b 489 498 486 504;r 456 465 450 465;b 459 468 456 468;b 453 459 450 459;r 462 471;r 444 447 438 447;b 426 435 420 435;r 417 429;
b 417 423;r 417 420 411 423;r 399 411;r 396 402 396 405;b 387 393 381 405;b 387 393 384 396;r 375 387 369 387;b 372 375 363 375;r 366 378;b 360 378;
r 339 360;r 291 324 285 324;b 279 282 276 303;r 279 297 276 297;r 243 252 234 255;b 228 267 225 288;r 240 279 240 288;r 225 240;b 228 282 219 291;r 276 288 264 318;
b 285 306 285 318;b 297 312 297 327;r 243 282;b 237 243 237 249;b 216 222 210 222;b 198 201 174 201;r 204 210 195 240;r 171 186 171 195;r 138 174 129 174;b 129 141 123 168;
r 156 159 141 162;b 189 210 183 219;b 219 282 219 285;r 213 261 210 267;b 234 255 219 273;r 249 279 240 291;b 195 213 177 216;r 165 171 159 174;r 144 150 141 165;r 129 159;
r 108 132 105 132;b 84 114 75 135;r 102 123 90 123;b 105 204 96 204;r 174 189 162 216;r 123 150 111 150;b 135 183 129 210;r 180 192 168 210;r 171 183 153 201;b 159 195 156 207;
b 231 264 210 267;r 213 255 210 291;b 204 222 189 243;b 234 264 228 291;b 282 309 249 312;b 279 303 273 324;b 273 285 255 285;b 288 357 276 357;r 348 360 336 393;r 303 327 285 327;
b 336 348 333 363;b 372 387 351 390;r 360 384 351 393;b 327 357 315 357;r 321 339 321 345;b 333 369;b 354 363 354 381;b 396 441;b 432 480 420 522;b 474 489 444 489;
r 375 480 372 480;b 402 417;r 402 405 399 435;b 375 378 369 381;b 390 411 381 414;b 402 417 402 423;b 408 411 402 417;r 399 417 396 417;r 378 396 369 396;r 351 360 345 360;
b 336 339 330 348;b 318 351 309 354`.split(';').map(s => s.trim().split(' '));

    // Volume bar tops, "b" marks a falling day
    const volumes = `249 252 243 261 267 267 261 243 246 219 240 228b 237 240 234 258b 255 237 222 198 240b 225 207 189b 216b 234 219 213 213 135b
150 66 108 87 117 117 153b 144b 84b 78 144 174b 189 171 207b 192b 165 156 156 150b 105 159b 153 213 189b 192b 219b 153b 183 114b
150 162 180 186 174b 177 165b 195 189 189 222b 222 207 192 171 195b 201 156 219 225b 195 177 213 249 216 174b 216 201 195b 243
246b 252b 234 261 249 234 225b 216 231 231 261b 258b 258b 258 258b 255 252 249 240 240 249 249b 270 252b 264 258 249b 270b 258 255b
252b 255 258b 249b 252b 240 258 255b 252 267 264b 273b 267 270 267 267b 285 276b 258b 270b 261 285b 279 276 282b 282b 282 276 273 264 276 267b`.split(/\s+/);

    const rect = (x, y, w, h, fill) => `<rect x="${x}" y="${y}" width="${w}" height="${h}" fill="${fill}"/>`;
    let out = '';
    candles.forEach(([c, top, bottom, high = top, low = bottom], i) => {
      const x = Math.round(64 + 5.62 * i);
      const fill = c === 'r' ? '#cf2a0c' : '#1261bd';
      out += rect(x + 2, 175 + high / 3, 1, (low - high) / 3, fill);
      out += rect(x, 175 + top / 3, 5, (bottom - top) / 3, fill);
    });
    volumes.forEach((v, i) => {
      const top = parseInt(v) / 3;
      out += rect(Math.round(64 + 5.62 * i), 390 + top, 5, 109 - top, v.endsWith('b') ? '#00008b' : '#a52a2a');
    });
    document.getElementById('bars').innerHTML = out;

    // [colour, pane top, points]
    const lines = [
      ['#ff00ff', 175, '714,646 750,642 790,634 850,628 920,621 970,613 1020,606 1080,599 1170,592 1240,583 1320,575 1400,563 1470,555 1540,546 1640,528 1750,508 1840,485 1890,474 1980,455 2030,442 2070,430 2120,421 2200,400 2270,388 2360,377 2450,371 2510,364 2590,358 2670,354 2710,350 2747,350'],
      ['#008000', 175, '310,646 350,641 380,640 440,630 490,630 530,622 600,615 680,605 760,587 805,576 870,565 920,560 960,553 1020,542 1090,530 1140,524 1210,518 1270,511 1330,502 1400,491 1460,480 1540,470 1590,458 1640,442 1700,430 1770,418 1840,402 1870,388 1920,374 1980,357 2030,345 2085,322 2120,313 2160,297 2200,286 2250,271 2290,264 2350,256 2410,253 2450,250 2510,250 2560,255 2620,260 2690,273 2747,274'],
      ['#ff0000', 175, '199,644 220,642 270,634 310,628 350,616 390,606 430,593 470,582 510,571 550,563 590,550 630,545 670,540 700,531 740,520 775,508 805,493 840,489 880,488 920,484 960,480 1020,474 1050,474 1100,480 1130,488 1165,496 1210,495 1260,495 1290,491 1350,487 1400,479 1450,464 1490,447 1545,420 1580,397 1630,368 1670,343 1710,327 1750,314 1800,286 1850,260 1880,236 1910,231 1960,230 2000,222 2030,213 2060,196 2085,184 2120,179 2160,175 2210,177 2225,184 2270,182 2320,190 2360,208 2390,228 2415,250 2460,275 2510,304 2550,340 2590,361 2630,376 2670,386 2710,391 2747,391'],
      ['#000000', 175, '199,628 220,622 245,608 270,601 310,592 350,578 380,570 410,563 440,558 470,554 500,543 530,535 553,533 575,524 600,530 612,530 625,522 650,522 670,519 690,509 710,498 735,481 760,467 780,451 795,438 810,432 823,434 835,447 850,457 862,468 875,478 885,489 895,500 908,505 925,500 945,495 965,496 990,489 1020,478 1040,474 1065,475 1095,482 1115,493 1140,500 1165,510 1180,516 1205,520 1225,518 1245,506 1265,497 1285,486 1310,470 1350,454 1380,438 1410,421 1450,404 1480,391 1510,379 1545,370 1565,353 1590,325 1620,288 1645,261 1665,250 1685,250 1710,263 1720,266 1735,279 1755,284 1780,276 1800,260 1820,230 1850,195 1870,171 1890,162 1905,163 1920,180 1940,200 1960,229 1975,241 1990,241 2005,224 2025,198 2045,165 2065,138 2085,124 2098,124 2115,137 2140,139 2160,158 2175,172 2195,166 2210,172 2225,194 2255,203 2275,225 2295,247 2320,264 2340,285 2360,318 2380,322 2395,330 2410,349 2435,350 2460,356 2490,356 2510,375 2530,405 2545,427 2565,427 2580,439 2595,435 2610,420 2625,402 2645,403 2695,403 2720,390 2747,367'],
      ['#2f8a8a', 500, '199,166 280,152 350,143 400,133 440,130 520,124 680,124 720,120 770,114 810,103 850,105 900,120 940,133 1000,145 1070,151 1130,160 1170,168 1205,177 1250,181 1300,175 1340,167 1400,150 1450,137 1500,124 1533,121 1583,108 1633,84 1693,67 1733,72 1773,75 1833,71 1883,62 1923,63 1963,80 2003,94 2053,95 2093,89 2163,93 2213,110 2263,133 2313,165 2363,198 2423,234 2463,246 2503,256 2543,272 2578,280 2633,280 2683,272 2723,256 2748,244'],
      ['#ff0000', 500, '199,157 240,147 290,141 360,128 400,126 460,124 520,119 535,122 590,122 610,127 665,126 700,121 740,107 775,99 800,91 812,91 828,102 845,118 870,127 895,141 930,150 980,157 1010,151 1050,152 1080,160 1110,166 1140,175 1162,188 1175,183 1195,187 1235,187 1265,176 1310,164 1360,143 1410,128 1460,118 1500,109 1533,108 1563,93 1613,67 1633,58 1671,49 1698,60 1728,79 1753,81 1803,71 1833,66 1868,46 1888,46 1913,67 1938,86 1963,106 1993,116 2013,104 2053,86 2088,76 2113,94 2138,98 2173,116 2203,125 2223,147 2253,163 2268,172 2293,197 2313,211 2333,220 2358,243 2383,247 2413,264 2443,271 2463,265 2493,265 2508,272 2528,295 2545,306 2563,295 2593,285 2618,273 2668,265 2698,250 2718,231 2748,214'],
    ];
    document.getElementById('lines').innerHTML = lines.map(([color, top, pts]) => {
      const scaled = pts.split(' ').map(p => {
        const [x, y] = p.split(',');
        return (x / 3).toFixed(1) + ',' + (top + y / 3).toFixed(1);
      });
      return `<polyline points="${scaled.join(' ')}" stroke="${color}"/>`;
    }).join('');
  </script>
</body>
</html>
